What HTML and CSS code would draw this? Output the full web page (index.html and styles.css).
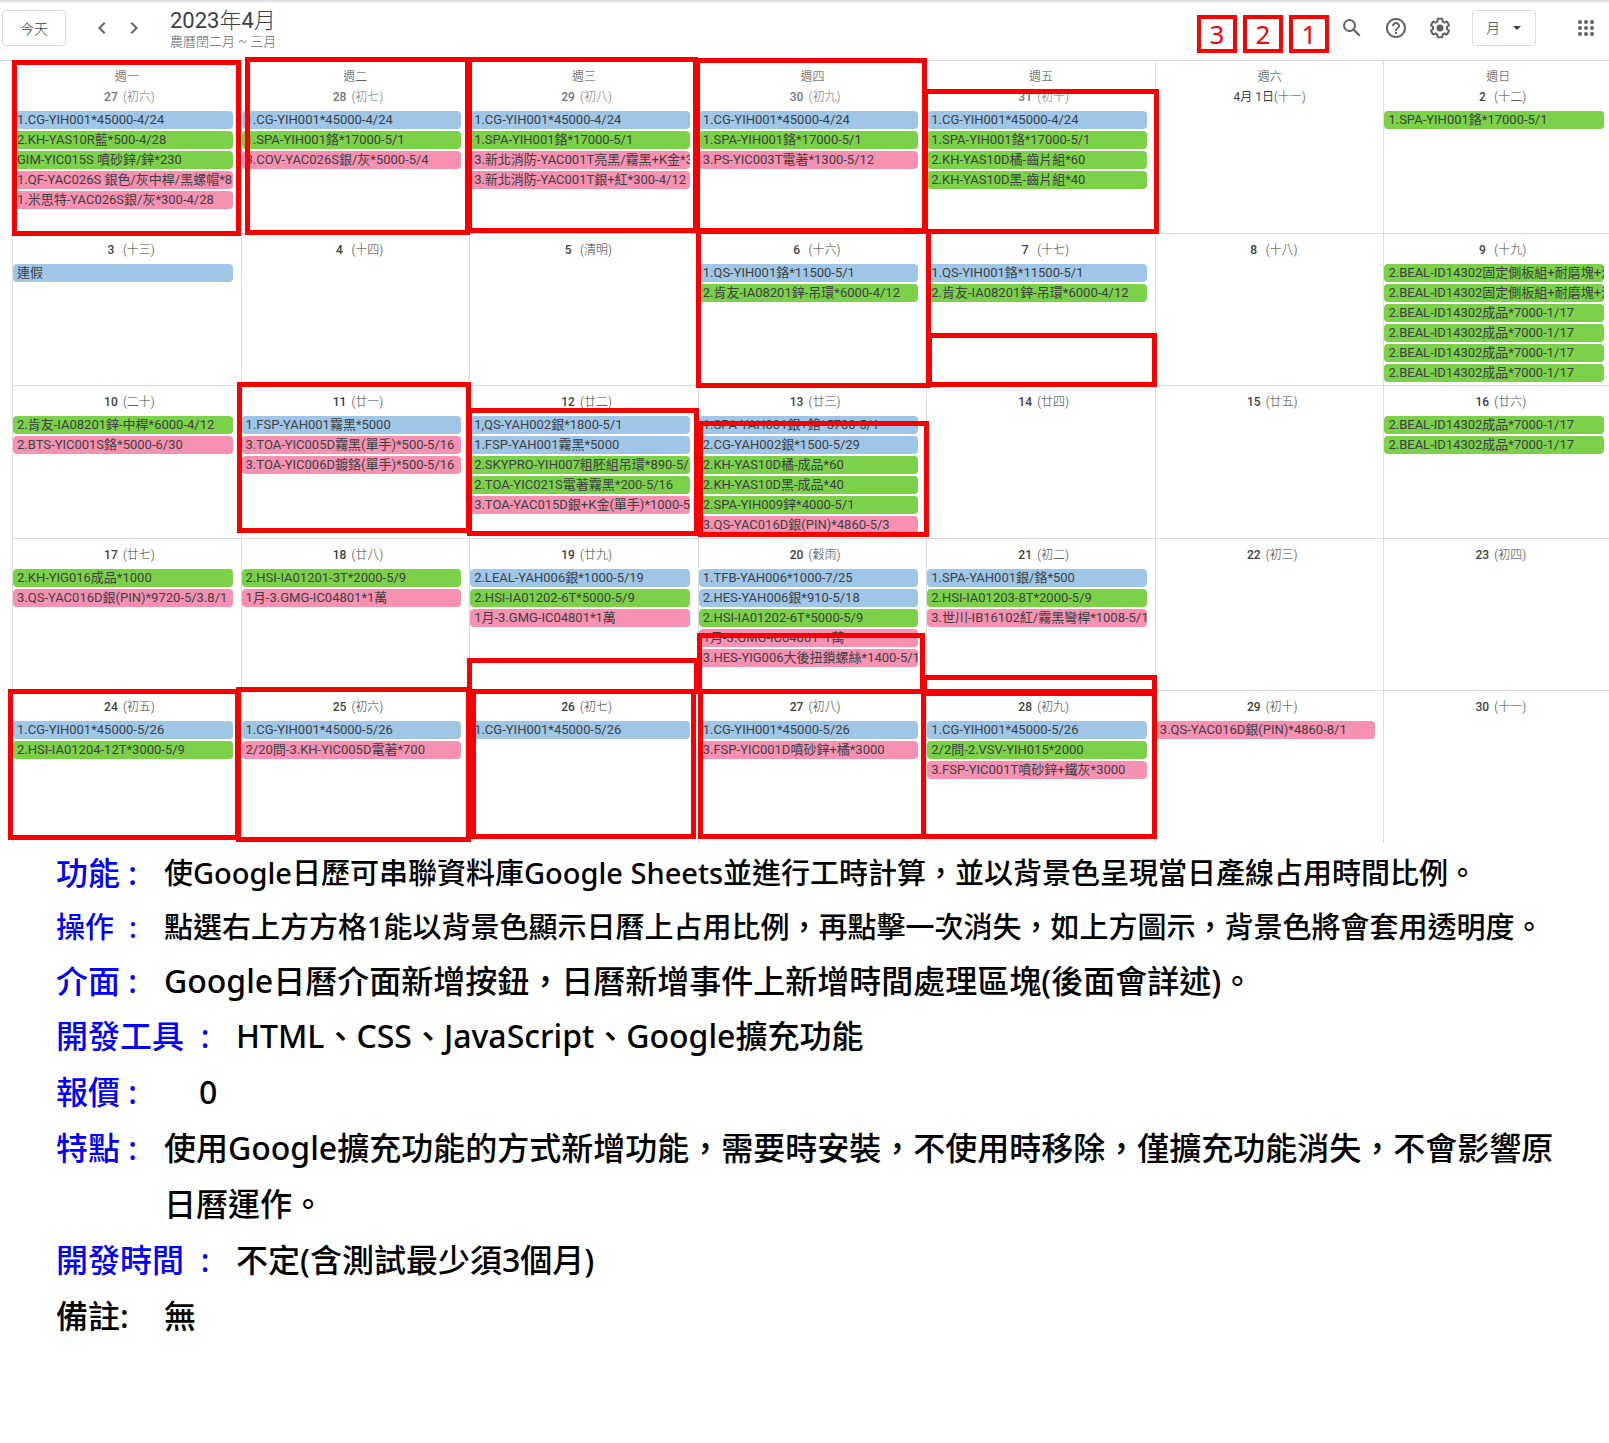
FILE: index.html
```html
<!DOCTYPE html>
<html lang="zh-Hant">
<head>
<meta charset="utf-8">
<meta name="viewport" content="width=device-width, initial-scale=1">
<title>2023年4月</title>
<link rel="stylesheet" href="styles.css">
</head>
<body>
<header class="toolbar">
  <button class="today" type="button">今天</button>
  <nav class="pager">
    <button class="icon-button" type="button" aria-label="上個月"><svg viewBox="0 0 24 24"><path d="M15.41 7.41 14 6l-6 6 6 6 1.41-1.41L10.83 12z"/></svg></button>
    <button class="icon-button" type="button" aria-label="下個月"><svg viewBox="0 0 24 24"><path d="M10 6 8.59 7.41 13.17 12l-4.58 4.59L10 18l6-6z"/></svg></button>
  </nav>
  <div class="heading">
    <h1 class="title">2023<span class="thin">年</span>4<span class="thin">月</span></h1>
    <p class="subtitle">農曆閏二月 ~ 三月</p>
  </div>
  <div class="lines">
    <button class="line" type="button">3</button>
    <button class="line" type="button">2</button>
    <button class="line" type="button">1</button>
  </div>
  <div class="tools">
    <button class="icon-button" type="button" aria-label="搜尋"><svg viewBox="0 0 24 24"><path d="M20.49 19l-5.73-5.73C15.53 12.2 16 10.91 16 9.5A6.5 6.5 0 1 0 9.5 16c1.41 0 2.7-.47 3.77-1.24L19 20.49 20.49 19zM5 9.5C5 7.01 7.01 5 9.5 5S14 7.01 14 9.5 11.99 14 9.5 14 5 11.99 5 9.5z"/></svg></button>
    <button class="icon-button" type="button" aria-label="說明"><svg viewBox="0 0 24 24"><path d="M11 18h2v-2h-2v2zm1-16C6.48 2 2 6.48 2 12s4.48 10 10 10 10-4.48 10-10S17.52 2 12 2zm0 18c-4.41 0-8-3.59-8-8s3.59-8 8-8 8 3.59 8 8-3.59 8-8 8zm0-14c-2.21 0-4 1.79-4 4h2c0-1.1.9-2 2-2s2 .9 2 2c0 2-3 1.75-3 5h2c0-2.25 3-2.5 3-5 0-2.21-1.79-4-4-4z"/></svg></button>
    <button class="icon-button" type="button" aria-label="設定"><svg viewBox="0 0 24 24"><path d="M13.85 22.25h-3.7c-.74 0-1.36-.54-1.45-1.27l-.27-1.89c-.27-.14-.53-.29-.79-.46l-1.8.72c-.7.26-1.47-.03-1.81-.65L2.2 15.53c-.35-.66-.2-1.44.36-1.88l1.53-1.19c-.01-.15-.02-.3-.02-.46 0-.15.01-.31.02-.46l-1.52-1.19c-.59-.45-.74-1.26-.37-1.88l1.85-3.19c.34-.62 1.11-.9 1.79-.63l1.81.73c.26-.17.52-.32.78-.46l.27-1.91c.09-.7.71-1.25 1.44-1.25h3.7c.74 0 1.36.54 1.45 1.27l.27 1.89c.27.14.53.29.79.46l1.8-.72c.71-.26 1.48.03 1.82.65l1.84 3.18c.36.66.2 1.44-.36 1.88l-1.52 1.19c.01.15.02.3.02.46s-.01.31-.02.46l1.52 1.19c.56.45.72 1.23.37 1.86l-1.86 3.22c-.34.62-1.11.9-1.8.63l-1.8-.72c-.26.17-.52.32-.78.46l-.27 1.91c-.1.68-.72 1.22-1.46 1.22zm-3.23-2h2.76l.37-2.55.53-.22c.44-.18.88-.44 1.34-.78l.45-.34 2.38.96 1.38-2.4-2.03-1.58.07-.56c.03-.26.06-.51.06-.78s-.03-.53-.06-.78l-.07-.56 2.03-1.58-1.39-2.4-2.39.96-.45-.35c-.42-.32-.87-.58-1.33-.77l-.52-.22-.37-2.55h-2.76l-.37 2.55-.53.21c-.44.19-.88.44-1.34.79l-.45.33-2.38-.95-1.39 2.39 2.03 1.58-.07.56a7 7 0 0 0-.06.79c0 .26.02.53.06.78l.07.56-2.03 1.58 1.38 2.4 2.39-.96.45.35c.43.33.86.58 1.33.77l.53.22.38 2.55z"/><circle cx="12" cy="12" r="3.5"/></svg></button>
    <div class="view">
      <select class="view-select" aria-label="檢視"><option>月</option></select>
      <svg class="view-arrow" viewBox="0 0 8 4"><path d="M0 0h8L4 4z"/></svg>
    </div>
    <button class="icon-button apps" type="button" aria-label="應用程式"><svg viewBox="0 0 24 24"><circle cx="6" cy="6" r="2"/><circle cx="12" cy="6" r="2"/><circle cx="18" cy="6" r="2"/><circle cx="6" cy="12" r="2"/><circle cx="12" cy="12" r="2"/><circle cx="18" cy="12" r="2"/><circle cx="6" cy="18" r="2"/><circle cx="12" cy="18" r="2"/><circle cx="18" cy="18" r="2"/></svg></button>
  </div>
</header>

<main>
<div class="calendar-wrap">
<div class="calendar">
  <section class="day past first"><p class="weekday">週一</p><p class="date"><b>27</b><i>(初六)</i></p>
    <ul><li class="blue"><span>1.CG-YIH001*45000-4/24</span></li><li class="green"><span>2.KH-YAS10R藍*500-4/28</span></li><li class="green"><span>GIM-YIC015S 噴砂鋅/鋅*230</span></li><li class="pink"><span>1.QF-YAC026S 銀色/灰中桿/黑螺帽*8</span></li><li class="pink"><span>1.米思特-YAC026S銀/灰*300-4/28</span></li></ul><div class="frame mar27"></div></section>
  <section class="day past first"><p class="weekday">週二</p><p class="date"><b>28</b><i>(初七)</i></p>
    <ul><li class="blue"><span>1.CG-YIH001*45000-4/24</span></li><li class="green"><span>1.SPA-YIH001鉻*17000-5/1</span></li><li class="pink"><span>3.COV-YAC026S銀/灰*5000-5/4</span></li></ul><div class="frame mar28"></div></section>
  <section class="day past first"><p class="weekday">週三</p><p class="date"><b>29</b><i>(初八)</i></p>
    <ul><li class="blue"><span>1.CG-YIH001*45000-4/24</span></li><li class="green"><span>1.SPA-YIH001鉻*17000-5/1</span></li><li class="pink"><span>3.新北消防-YAC001T亮黑/霧黑+K金*3</span></li><li class="pink"><span>3.新北消防-YAC001T銀+紅*300-4/12</span></li></ul><div class="frame mar29"></div></section>
  <section class="day past first"><p class="weekday">週四</p><p class="date"><b>30</b><i>(初九)</i></p>
    <ul><li class="blue"><span>1.CG-YIH001*45000-4/24</span></li><li class="green"><span>1.SPA-YIH001鉻*17000-5/1</span></li><li class="pink"><span>3.PS-YIC003T電著*1300-5/12</span></li></ul><div class="frame mar30"></div></section>
  <section class="day past first"><p class="weekday">週五</p><p class="date"><b>31</b><i>(初十)</i></p>
    <ul><li class="blue"><span>1.CG-YIH001*45000-4/24</span></li><li class="green"><span>1.SPA-YIH001鉻*17000-5/1</span></li><li class="green"><span>2.KH-YAS10D橘-齒片組*60</span></li><li class="green"><span>2.KH-YAS10D黑-齒片組*40</span></li></ul><div class="frame mar31"></div></section>
  <section class="day first"><p class="weekday">週六</p><p class="date"><b class="long">4月 1日</b><i>(十一)</i></p></section>
  <section class="day first"><p class="weekday">週日</p><p class="date"><b>2</b><i>(十二)</i></p>
    <ul><li class="green"><span>1.SPA-YIH001鉻*17000-5/1</span></li></ul></section>

  <section class="day"><p class="date"><b>3</b><i>(十三)</i></p>
    <ul><li class="blue"><span>連假</span></li></ul></section>
  <section class="day"><p class="date"><b>4</b><i>(十四)</i></p></section>
  <section class="day"><p class="date"><b>5</b><i>(清明)</i></p></section>
  <section class="day"><p class="date"><b>6</b><i>(十六)</i></p>
    <ul><li class="blue"><span>1.QS-YIH001鉻*11500-5/1</span></li><li class="green"><span>2.肯友-IA08201鋅-吊環*6000-4/12</span></li></ul><div class="frame apr6"></div></section>
  <section class="day"><p class="date"><b>7</b><i>(十七)</i></p>
    <ul><li class="blue"><span>1.QS-YIH001鉻*11500-5/1</span></li><li class="green"><span>2.肯友-IA08201鋅-吊環*6000-4/12</span></li></ul><div class="frame apr7"></div></section>
  <section class="day"><p class="date"><b>8</b><i>(十八)</i></p></section>
  <section class="day"><p class="date"><b>9</b><i>(十九)</i></p>
    <ul><li class="green"><span>2.BEAL-ID14302固定側板組+耐磨塊+消</span></li><li class="green"><span>2.BEAL-ID14302固定側板組+耐磨塊+消</span></li><li class="green"><span>2.BEAL-ID14302成品*7000-1/17</span></li><li class="green"><span>2.BEAL-ID14302成品*7000-1/17</span></li><li class="green"><span>2.BEAL-ID14302成品*7000-1/17</span></li><li class="green"><span>2.BEAL-ID14302成品*7000-1/17</span></li></ul></section>

  <section class="day"><p class="date"><b>10</b><i>(二十)</i></p>
    <ul><li class="green"><span>2.肯友-IA08201鋅-中桿*6000-4/12</span></li><li class="pink"><span>2.BTS-YIC001S鉻*5000-6/30</span></li></ul></section>
  <section class="day"><p class="date"><b>11</b><i>(廿一)</i></p>
    <ul><li class="blue"><span>1.FSP-YAH001霧黑*5000</span></li><li class="pink"><span>3.TOA-YIC005D霧黑(單手)*500-5/16</span></li><li class="pink"><span>3.TOA-YIC006D鍍鉻(單手)*500-5/16</span></li></ul><div class="frame apr11"></div></section>
  <section class="day"><p class="date"><b>12</b><i>(廿二)</i></p>
    <ul><li class="blue"><span>1,QS-YAH002銀*1800-5/1</span></li><li class="blue"><span>1.FSP-YAH001霧黑*5000</span></li><li class="green"><span>2.SKYPRO-YIH007粗胚組吊環*890-5/</span></li><li class="green"><span>2.TOA-YIC021S電著霧黑*200-5/16</span></li><li class="pink"><span>3.TOA-YAC015D銀+K金(單手)*1000-5</span></li></ul><div class="frame apr12"></div></section>
  <section class="day"><p class="date"><b>13</b><i>(廿三)</i></p>
    <ul><li class="blue"><span>1.SPA-YAH001銀+鉻*5700-5/1</span></li><li class="blue"><span>2.CG-YAH002銀*1500-5/29</span></li><li class="green"><span>2.KH-YAS10D橘-成品*60</span></li><li class="green"><span>2.KH-YAS10D黑-成品*40</span></li><li class="green"><span>2.SPA-YIH009鋅*4000-5/1</span></li><li class="pink"><span>3.QS-YAC016D銀(PIN)*4860-5/3</span></li></ul><div class="frame apr13"></div></section>
  <section class="day"><p class="date"><b>14</b><i>(廿四)</i></p></section>
  <section class="day"><p class="date"><b>15</b><i>(廿五)</i></p></section>
  <section class="day"><p class="date"><b>16</b><i>(廿六)</i></p>
    <ul><li class="green"><span>2.BEAL-ID14302成品*7000-1/17</span></li><li class="green"><span>2.BEAL-ID14302成品*7000-1/17</span></li></ul></section>

  <section class="day"><p class="date"><b>17</b><i>(廿七)</i></p>
    <ul><li class="green"><span>2.KH-YIG016成品*1000</span></li><li class="pink"><span>3.QS-YAC016D銀(PIN)*9720-5/3.8/1</span></li></ul></section>
  <section class="day"><p class="date"><b>18</b><i>(廿八)</i></p>
    <ul><li class="green"><span>2.HSI-IA01201-3T*2000-5/9</span></li><li class="pink"><span>1月-3.GMG-IC04801*1萬</span></li></ul></section>
  <section class="day"><p class="date"><b>19</b><i>(廿九)</i></p>
    <ul><li class="blue"><span>2.LEAL-YAH006銀*1000-5/19</span></li><li class="green"><span>2.HSI-IA01202-6T*5000-5/9</span></li><li class="pink"><span>1月-3.GMG-IC04801*1萬</span></li></ul><div class="frame apr19"></div></section>
  <section class="day"><p class="date"><b>20</b><i>(穀雨)</i></p>
    <ul><li class="blue"><span>1.TFB-YAH006*1000-7/25</span></li><li class="blue"><span>2.HES-YAH006銀*910-5/18</span></li><li class="green"><span>2.HSI-IA01202-6T*5000-5/9</span></li><li class="pink"><span>1月-3.GMG-IC04801*1萬</span></li><li class="pink"><span>3.HES-YIG006大後扭鎖螺絲*1400-5/1</span></li></ul><div class="frame apr20"></div></section>
  <section class="day"><p class="date"><b>21</b><i>(初二)</i></p>
    <ul><li class="blue"><span>1.SPA-YAH001銀/鉻*500</span></li><li class="green"><span>2.HSI-IA01203-8T*2000-5/9</span></li><li class="pink"><span>3.世川-IB16102紅/霧黑彎桿*1008-5/1</span></li></ul><div class="frame apr21"></div></section>
  <section class="day"><p class="date"><b>22</b><i>(初三)</i></p></section>
  <section class="day"><p class="date"><b>23</b><i>(初四)</i></p></section>

  <section class="day"><p class="date"><b>24</b><i>(初五)</i></p>
    <ul><li class="blue"><span>1.CG-YIH001*45000-5/26</span></li><li class="green"><span>2.HSI-IA01204-12T*3000-5/9</span></li></ul><div class="frame apr24"></div></section>
  <section class="day"><p class="date"><b>25</b><i>(初六)</i></p>
    <ul><li class="blue"><span>1.CG-YIH001*45000-5/26</span></li><li class="pink"><span>2/20問-3.KH-YIC005D電著*700</span></li></ul><div class="frame apr25"></div></section>
  <section class="day"><p class="date"><b>26</b><i>(初七)</i></p>
    <ul><li class="blue"><span>1.CG-YIH001*45000-5/26</span></li></ul><div class="frame apr26"></div></section>
  <section class="day"><p class="date"><b>27</b><i>(初八)</i></p>
    <ul><li class="blue"><span>1.CG-YIH001*45000-5/26</span></li><li class="pink"><span>3.FSP-YIC001D噴砂鋅+橘*3000</span></li></ul><div class="frame apr27"></div></section>
  <section class="day"><p class="date"><b>28</b><i>(初九)</i></p>
    <ul><li class="blue"><span>1.CG-YIH001*45000-5/26</span></li><li class="green"><span>2/2問-2.VSV-YIH015*2000</span></li><li class="pink"><span>3.FSP-YIC001T噴砂鋅+鐵灰*3000</span></li></ul><div class="frame apr28"></div></section>
  <section class="day"><p class="date"><b>29</b><i>(初十)</i></p>
    <ul><li class="pink"><span>3.QS-YAC016D銀(PIN)*4860-8/1</span></li></ul></section>
  <section class="day"><p class="date"><b>30</b><i>(十一)</i></p></section>
</div>
</div>

<dl class="notes">
  <div class="note tight"><dt>功能 :</dt><dd class="small">使Google日歷可串聯資料庫Google Sheets並進行工時計算，並以背景色呈現當日產線占用時間比例。</dd></div>
  <div class="note tight"><dt class="small">操作&nbsp; :</dt><dd class="small">點選右上方方格1能以背景色顯示日曆上占用比例，再點擊一次消失，如上方圖示，背景色將會套用透明度。</dd></div>
  <div class="note tight"><dt>介面 :</dt><dd>Google日曆介面新增按鈕，日曆新增事件上新增時間處理區塊(後面會詳述)。</dd></div>
  <div class="note"><dt class="wide">開發工具&nbsp; :</dt><dd>HTML、CSS、JavaScript、Google擴充功能</dd></div>
  <div class="note"><dt>報價 :</dt><dd class="indent">0</dd></div>
  <div class="note"><dt>特點 :</dt><dd>使用Google擴充功能的方式新增功能，需要時安裝，不使用時移除，僅擴充功能消失，不會影響原日曆運作。</dd></div>
  <div class="note"><dt class="wide">開發時間&nbsp; :</dt><dd>不定(含測試最少須3個月)</dd></div>
  <div class="note"><dt class="plain">備註:</dt><dd>無</dd></div>
</dl>
</main>
</body>
</html>
```
FILE: styles.css
```css
* { box-sizing: border-box; }
body, h1, p, ul, dl, dd { margin: 0; padding: 0; }
body {
  background: #fff;
  color: #3c4043;
  font-family: Roboto, "Noto Sans CJK TC", sans-serif;
  overflow-x: hidden;
}
button, select { font: inherit; color: inherit; background: none; cursor: pointer; }
ul { list-style: none; }

/* Toolbar */
.toolbar {
  display: flex;
  align-items: center;
  height: 60px;
  padding: 0 11px 4px 2px;
  box-shadow: inset 0 3px 2px -1px #dcdde0;
}
.today {
  width: 64px;
  height: 36px;
  padding: 0;
  border: 1px solid #dadce0;
  border-radius: 4px;
  font-size: 14px;
  font-weight: 300;
}
.pager { display: flex; gap: 8px; margin: 0 24px; }
.icon-button { display: block; width: 24px; height: 24px; padding: 0; border: 0; }
.icon-button svg { display: block; width: 24px; height: 24px; fill: #5f6368; }
.heading { padding-top: 4px; }
.title { font-size: 22px; line-height: 24px; font-weight: 400; }
.thin { font-weight: 300; }
.subtitle { font-size: 13px; line-height: 18px; font-weight: 300; color: #5f6368; }
.lines { display: flex; gap: 6px; margin: 12px 11px 0 auto; }
.line {
  width: 40px;
  height: 38px;
  padding: 0;
  border: 4px solid #f00;
  color: #f00;
  font: 26px/30px "Noto Sans", sans-serif;
}
.tools { display: flex; align-items: center; gap: 20px; }
.view { position: relative; }
.view-select {
  display: block;
  appearance: none;
  width: 64px;
  height: 36px;
  padding: 0 0 0 13px;
  border: 1px solid #dadce0;
  border-radius: 4px;
  font-size: 14px;
  font-weight: 300;
}
.view-arrow { position: absolute; right: 15px; top: 16px; width: 8px; height: 4px; fill: #3c4043; pointer-events: none; }
.apps { margin-left: 18px; }

/* Month grid */
.calendar-wrap { padding-left: 12px; border-top: 1px solid #dadce0; }
.calendar {
  display: grid;
  grid-template-columns: repeat(7, minmax(0, 1fr));
  grid-template-rows: minmax(172px, auto) repeat(2, minmax(152px, auto) minmax(153px, auto));
  margin-right: -3px;
}
.day {
  position: relative;
  padding: 7px 8px 0 0;
  border-top: 1px solid #dadce0;
  border-left: 1px solid #dadce0;
  font-size: 12px;
}
.day.first { border-top: 0; padding-top: 6px; }
.weekday { padding-left: 8px; line-height: 20px; font-weight: 300; text-align: center; }
.date { display: flex; justify-content: center; padding-left: 8px; line-height: 18px; }
.first .date { line-height: 20px; }
.date b { min-width: 24px; text-align: center; font-weight: 500; }
.date b.long { font-weight: 400; }
.date i { font-style: normal; font-weight: 300; }
.past .date { color: #70757a; }
.day ul { display: flex; flex-direction: column; gap: 2px; margin-top: 5px; }
.first ul { margin-top: 4px; }
.day li { height: 18px; padding-left: 4px; border-radius: 4px; font-size: 13px; line-height: 18px; }
.day li span { display: block; overflow: hidden; white-space: nowrap; }
.blue { background: #9fc6e7; }
.green { background: #7bd148; }
.pink { background: #f691b2; }

/* Share of each day taken by the production lines */
.frame { position: absolute; z-index: 1; border: 5px solid #f80000; pointer-events: none; }
.mar27 { inset: -1px 0 -3px -1px; }
.mar28 { inset: -4px -1px -2px 3px; }
.mar29 { inset: -4px 0 0 -3px; }
.mar30 { inset: -3px -1px 0 -4px; }
.mar31 { inset: 28px -4px -1px -4px; }
.apr6 { inset: -5px -5px -3px -3px; }
.apr7 { inset: 99px -2px -2px 0; }
.apr11 { inset: -4px -2px 5px -5px; }
.apr12 { inset: 22px -1px 2px -3px; }
.apr13 { inset: 35px -3px 1px -1px; }
.apr19 { inset: 119px -1px -4px -3px; }
.apr20 { inset: 94px 1px -4px -2px; }
.apr21 { inset: 136px -2px -4px -5px; }
.apr24 { inset: -2px 1px 3px -5px; }
.apr25 { inset: -4px -2px 1px -6px; }
.apr26 { inset: -2px 2px 4px 1px; }
.apr27 { inset: -2px 0 4px -1px; }
.apr28 { inset: 0 -2px 4px -6px; }

/* Description */
.notes {
  padding: 3px 40px 40px 56px;
  color: #000;
  font-family: "Noto Sans", "Noto Sans CJK TC", sans-serif;
  font-size: 32px;
  font-weight: 500;
  line-height: 56px;
}
.note { display: flex; }
.tight { line-height: 54px; }
.note dt { flex: none; width: 108px; color: #00f; white-space: nowrap; }
.note dt.wide { width: 180px; }
.note dt.plain { color: #000; }
.note .small { font-size: 29px; }
.note .indent { padding-left: 35px; }
```
